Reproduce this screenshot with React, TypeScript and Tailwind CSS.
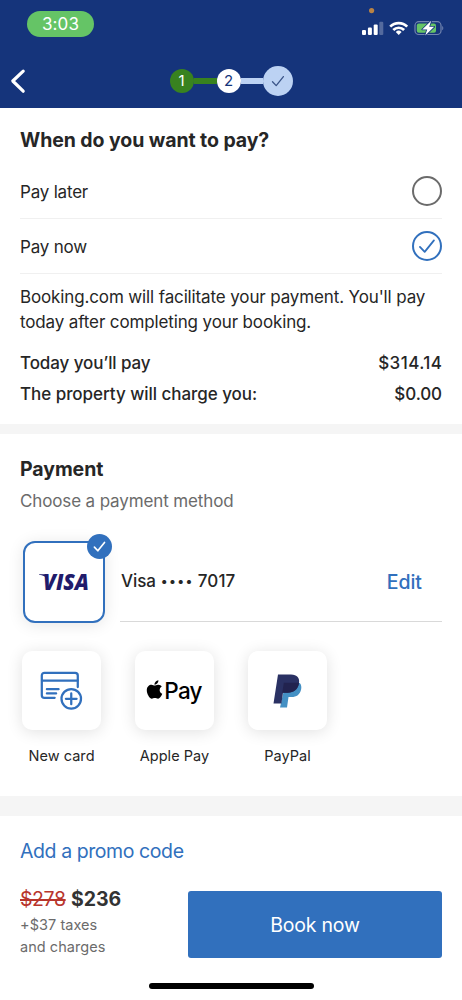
import React, { useState } from 'react'
import { FaApple } from 'react-icons/fa'

type PayTime = 'later' | 'now'

const payOptions: { id: PayTime, title: string }[] = [
  { id: 'later', title: 'Pay later' },
  { id: 'now', title: 'Pay now' },
]

const App = () => {
  return (
    <div className="w-full max-w-[462px] h-[1000px] flex flex-col bg-white text-[#262626] font-['Inter',sans-serif] overflow-hidden">
      <Header />
      <PayTimeSection />
      <div className="h-2.5 shrink-0 bg-[#f5f5f5]" />
      <PaymentSection />
      <div className="h-5 shrink-0 bg-[#f5f5f5]" />
      <Footer />
    </div>
  )
}

export default App

// Status bar + booking steps
const Header = () => (
  <header className="h-[108px] shrink-0 bg-[#15347b] text-white">
    <div className="h-[54px] pl-[27px] pr-[18px] pt-[11px] flex justify-between items-start">
      <span className="w-[67px] h-[26px] rounded-full bg-[#65c466] flex justify-center items-center text-[17px] tracking-[0.1px] pt-px">3:03</span>
      <StatusIcons />
    </div>
    <div className="h-[54px] grid grid-cols-[1fr_auto_1fr] items-center">
      <button className="pl-2.5 w-10">
        <svg width="16" height="26" viewBox="0 0 16 26" fill="none" stroke="white" strokeWidth="3.2" strokeLinecap="round" strokeLinejoin="round">
          <path d="M13.2 3.2 2.8 13l10.4 10.2" />
        </svg>
      </button>
      <div className="flex items-center text-[15px]">
        <span className="w-6 h-6 rounded-full bg-[#38821f] flex justify-center items-center pt-px">1</span>
        <span className="w-[23px] h-1.5 bg-[#38821f]" />
        <span className="w-6 h-6 rounded-full bg-white text-[#15347b] flex justify-center items-center pt-px">2</span>
        <span className="w-[22px] h-1.5 bg-[#bcd2f3]" />
        <span className="w-[30px] h-[30px] rounded-full bg-[#bcd2f3] flex justify-center items-center">
          <Check className="w-3.5 h-3.5 text-[#3a5488]" stroke={1.3} />
        </span>
      </div>
    </div>
  </header>
)

const StatusIcons = () => (
  <svg width="84" height="32" viewBox="360 6 84 32" className="-mt-[5px]">
    <circle cx="371.6" cy="10.6" r="2.6" fill="#b98345" />
    {/* signal */}
    <g fill="white">
      <rect x="362" y="30" width="4" height="5" rx="1.1" />
      <rect x="367.9" y="27.6" width="4" height="7.4" rx="1.1" />
      <rect x="373.7" y="24.4" width="4" height="10.6" rx="1.1" />
      <rect x="379.3" y="21.8" width="4" height="13.2" rx="1.1" fillOpacity="0.27" />
    </g>
    {/* wifi */}
    <g fill="none" stroke="white" strokeWidth="2.7">
      <path d="M390.2 26.6a12 12 0 0 1 17 0" />
      <path d="M393.3 30a7.6 7.6 0 0 1 10.8 0" />
    </g>
    <path d="M398.7 34.9l-2.9-3a4.2 4.2 0 0 1 5.8 0z" fill="white" />
    {/* battery */}
    <rect x="415" y="21.7" width="26" height="12.8" rx="3.8" fill="none" stroke="white" strokeOpacity="0.4" strokeWidth="1.2" />
    <path d="M442.3 26v4.2c1.3-.5 1.3-3.7 0-4.2z" fill="white" fillOpacity="0.45" />
    <rect x="416.8" y="23.5" width="19.2" height="9.2" rx="2" fill="#65c466" />
    <path d="M431.200 20.800l-9 8.700h5l-2 6 9-8.700h-5z" fill="white" stroke="#15347b" strokeWidth="1.6" paintOrder="stroke" strokeLinejoin="round" />
  </svg>
)

const Check: React.FC<{ className?: string, stroke?: number }> = ({ className, stroke = 1.5 }) => (
  <svg viewBox="0 0 14 14" className={className} fill="none" stroke="currentColor" strokeWidth={stroke} strokeLinecap="round" strokeLinejoin="round">
    <path d="M1.5 7.7 5.2 11.6 12.4 2.6" />
  </svg>
)

const PayTimeSection = () => {
  const [selected, setSelected] = useState<PayTime>('now')

  return (
    <section className="h-[316px] shrink-0 px-5 pt-[18px]">
      <h2 className="h-[38px] leading-[28px] text-[19.5px] font-bold tracking-[-0.08px] whitespace-nowrap">When do you want to pay?</h2>
      <ul>
        {payOptions.map((el) => (
          <li key={el.id} onClick={() => setSelected(el.id)} className="h-[55px] flex justify-between items-center border-b border-[#f0f0f0] cursor-pointer text-[17px]">
            <span className="pt-[3px] tracking-[-0.2px]">{el.title}</span>
            {selected == el.id
              ? <span className="w-[30px] h-[30px] rounded-full border-2 border-[#3170bd] text-[#3170bd] flex justify-center items-center">
                <Check className="w-[18px] h-[18px]" stroke={1.4} />
              </span>
              : <span className="w-[30px] h-[30px] rounded-full border-2 border-[#6b6b6b]" />}
          </li>
        ))}
      </ul>
      <p className="pt-[11px] text-[17px] leading-[24.5px] tracking-[-0.13px] whitespace-nowrap">
        Booking.com will facilitate your payment. You'll pay<br />today after completing your booking.
      </p>
      <div className="pt-[14px] text-[17px] font-medium leading-[31px]">
        <div className="flex justify-between">
          <span className="tracking-[-0.1px]">Today you’ll pay</span>
          <span className="tracking-[0.45px] -mr-[0.45px]">$314.14</span>
        </div>
        <div className="flex justify-between">
          <span className="tracking-[-0.04px]">The property will charge you:</span>
          <span className="tracking-[-0.1px]">$0.00</span>
        </div>
      </div>
    </section>
  )
}

const PaymentSection = () => (
  <section className="h-[362px] shrink-0 px-5">
    <h2 className="pt-[21px] leading-[28px] text-[19.5px] font-bold tracking-[-0.08px]">Payment</h2>
    <p className="pt-[6px] leading-[24px] text-[17px] tracking-[-0.13px] text-[#6b6b6b]">Choose a payment method</p>

    <div className="mt-[28px] pl-[3px] flex">
      <div className="relative w-[82px] h-[82px] shrink-0 rounded-[12px] border-[2.5px] border-[#3170bd] bg-white shadow-[0_2px_16px_rgba(0,0,0,0.1)] flex justify-center items-center">
        <VisaLogo />
        <span className="absolute -top-[9px] -right-[9px] w-[25px] h-[25px] rounded-full bg-[#3170bd] text-white flex justify-center items-center">
          <Check className="w-[13px] h-[13px]" stroke={1.8} />
        </span>
      </div>
      <div className="ml-[15px] h-[81px] flex-1 flex justify-between items-center border-b border-[#d9d9d9] pr-5">
        <span className="pl-px pt-[2px] text-[17px] font-medium tracking-[-0.1px] flex items-center">
          Visa
          <span className="ml-[5px] mr-[4px] text-[13px] tracking-[1.3px]">••••</span>
          <span className="tracking-[0.15px]">7017</span>
        </span>
        <button className="pt-[3px] text-[19.5px] font-medium text-[#3170bd]">Edit</button>
      </div>
    </div>

    <div className="mt-[28px] pl-[2px] flex gap-[34px]">
      <Method title="New card"><NewCardIcon /></Method>
      <Method title="Apple Pay">
        <span className="flex items-center text-black -ml-[3px]">
          <FaApple size={21} className="-mt-[2px] -mr-px" />
          <span className="text-[22.5px] leading-none font-medium tracking-[-0.8px] mt-px">Pay</span>
        </span>
      </Method>
      <Method title="PayPal"><PayPalLogo /></Method>
    </div>
  </section>
)

const Method: React.FC<{ title: string, children: React.ReactNode }> = ({ title, children }) => (
  <div className="w-[79px] flex flex-col items-center">
    <div className="w-[79px] h-[79px] rounded-[10px] bg-white shadow-[0_2px_16px_rgba(0,0,0,0.12)] flex justify-center items-center">{children}</div>
    <span className="mt-4 text-[14.5px] leading-5 tracking-[0.05px] whitespace-nowrap">{title}</span>
  </div>
)

const VisaLogo = () => (
  <svg width="56" height="32" viewBox="-3 -7 56 32" fill="#211b6b" overflow="visible">
    <text x="4" y="17" textLength="46" lengthAdjust="spacingAndGlyphs" className="font-['Open_Sans',sans-serif] font-extrabold italic text-[22px]">VISA</text>
    <path d="M0 1.300h6.500l2.500 5.500C7 3.800 4 2.200 0 1.800z" />
  </svg>
)

const NewCardIcon = () => (
  <svg width="43" height="39" viewBox="0 0 44 40" fill="none" stroke="#3170bd" strokeWidth="2.3" strokeLinecap="round">
    <path d="M15 27.500H4.500a2.700 2.700 0 0 1-2.700-2.700V4.500a2.700 2.700 0 0 1 2.700-2.700h31.500a2.700 2.700 0 0 1 2.700 2.700v12" />
    <path d="M2 9.800h36.500M7 18.600h12M7 23h9.500" />
    <circle cx="32" cy="28.500" r="10" />
    <path d="M32 23v11M26.500 28.500h11" />
  </svg>
)

const PayPalLogo = () => (
  <svg width="30" height="34" viewBox="0 0 30 34">
    <path d="M12.500 9h14.200c1.600 1.700 2 3.900 1.400 6.500-1.100 5-4.500 7.500-9.600 7.500h-3L14 33.500H7z" fill="#4490c4" />
    <path d="M5 .500h13c6.200 0 9 3.500 8 8.700-1 6-5 9.500-11.500 9.500H10L8.400 29.500H.500z" fill="#2a3163" />
    <path d="M10.800 8.700H26c-1 6.300-5 10-11.500 10H9.300z" fill="#22234f" />
  </svg>
)

const Footer = () => (
  <footer className="flex-1 px-5 flex flex-col">
    <button className="self-start mt-[21px] h-7 leading-7 text-[19.5px] tracking-[-0.42px] text-[#3170bd]">Add a promo code</button>
    <div className="mt-[20px] flex justify-between">
      <div className="text-[#6b6b6b]">
        <div className="h-[28px] leading-[28px] text-[19.5px] tracking-[-0.05px] whitespace-nowrap">
          <span className="text-[#b8352c] line-through decoration-[1.5px] tracking-[-0.4px]">$278</span>
          {' '}
          <span className="font-bold text-[#333]">$236</span>
        </div>
        <p className="mt-px text-[14.5px] leading-[22px] tracking-[0.05px]">+$37 taxes<br />and charges</p>
      </div>
      <button className="mt-[6px] w-[254px] h-[67px] rounded-[3px] bg-[#3170bd] text-white text-[19.5px] tracking-[-0.2px] pt-[3px]">Book now</button>
    </div>
    <div className="mt-[25px] w-[165px] h-1.5 rounded-full bg-black self-center" />
  </footer>
)
